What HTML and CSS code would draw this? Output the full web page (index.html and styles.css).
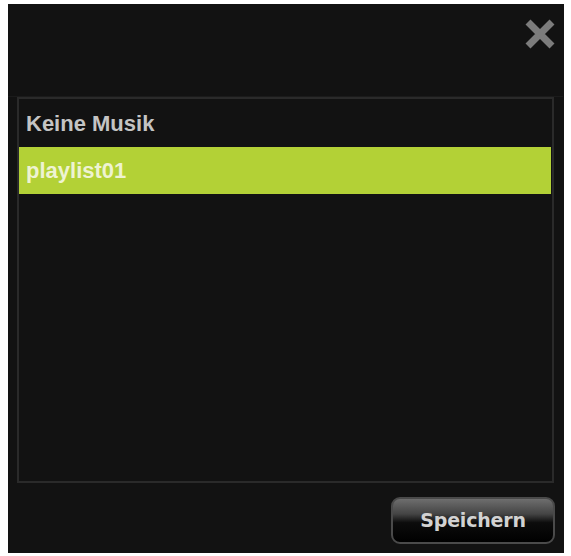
FILE: index.html
```html
<!DOCTYPE html>
<html lang="de">
<head>
<meta charset="utf-8">
<title>Playlist</title>
<link rel="stylesheet" href="styles.css">
</head>
<body>
<div class="panel">
  <div class="topbar">
    <button class="close" aria-label="Schließen">
      <svg width="34" height="34" viewBox="0 0 34 34"><path d="M5 5 L29 29 M29 5 L5 29" stroke="#7c7c7c" stroke-width="7" stroke-linecap="butt" fill="none"/></svg>
    </button>
  </div>
  <div class="listbox">
    <div class="row head">Keine Musik</div>
    <div class="row selected">playlist01</div>
  </div>
  <div class="footer">
    <button class="save">Speichern</button>
  </div>
</div>
</body>
</html>
```
FILE: styles.css
```css
html, body {
  margin: 0;
  padding: 0;
  background: #ffffff;
}
body {
  padding: 4px 7px 3px 8px;
  font-family: "Liberation Sans", Arial, sans-serif;
}
.panel {
  width: 556px;
  height: 549px;
  box-sizing: border-box;
  background: #121212;
  display: flex;
  flex-direction: column;
  padding: 0 10px 9px 9px;
}
.topbar {
  height: 93px;
  flex: none;
  display: flex;
  justify-content: flex-end;
  align-items: flex-start;
  padding-top: 13px;
  box-sizing: border-box;
  border-bottom: 1px solid #1b1b1b;
  margin: 0 -9px 0 -9px;
  padding-right: 6px;
}
.close {
  background: none;
  border: 0;
  padding: 0;
  width: 34px;
  height: 34px;
  display: block;
  filter: blur(0.4px);
}
.close svg { display: block; }
.listbox {
  flex: 1;
  border: 2px solid #2a2a2a;
  background: #121212;
  display: flex;
  flex-direction: column;
}
.row {
  font-weight: bold;
  font-size: 22px;
  padding-left: 7px;
  display: flex;
  align-items: center;
  box-sizing: border-box;
}
.row.head {
  height: 48px;
  color: #c4c4c4;
  padding-top: 2px;
}
.row.selected {
  height: 47px;
  background: #b3d136;
  color: #eef3d2;
  margin-right: 1px;
}
.footer {
  flex: none;
  margin-top: 14px;
  display: flex;
  justify-content: flex-end;
}
.save {
  width: 164px;
  height: 47px;
  margin-right: -1px;
  border: 2px solid #4a4a4a;
  border-radius: 9px;
  background: linear-gradient(to bottom, #6e6e6e 0%, #444 35%, #0c0c0c 55%, #000 100%);
  color: #d2d2d2;
  font-family: "DejaVu Sans", "Liberation Sans", sans-serif;
  font-weight: bold;
  font-size: 19px;
  letter-spacing: -0.2px;
  padding: 0 0 2px 0;
}
```
